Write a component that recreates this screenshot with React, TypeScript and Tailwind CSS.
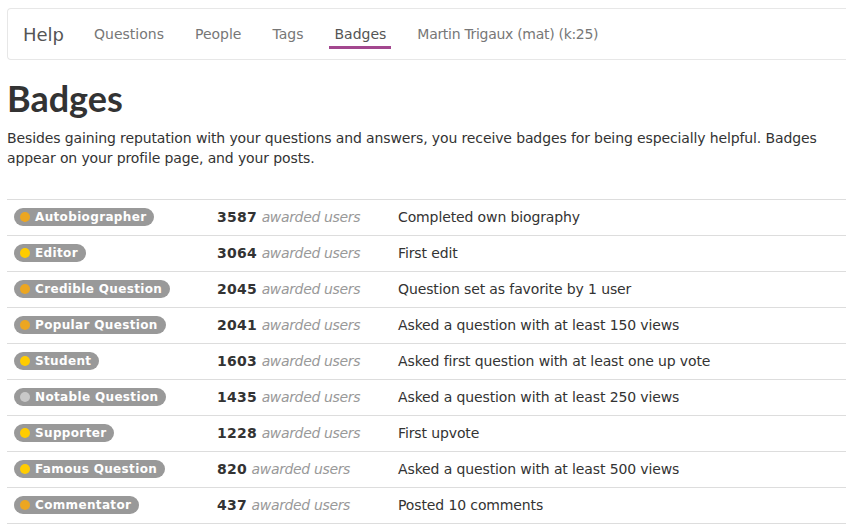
import React from 'react';

interface Badge {
  name: string;
  level: 'gold' | 'silver' | 'bronze';
  count: number;
  description: string;
}

const badges: Badge[] = [
  { name: 'Autobiographer', level: 'bronze', count: 3587, description: 'Completed own biography' },
  { name: 'Editor', level: 'gold', count: 3064, description: 'First edit' },
  { name: 'Credible Question', level: 'bronze', count: 2045, description: 'Question set as favorite by 1 user' },
  { name: 'Popular Question', level: 'bronze', count: 2041, description: 'Asked a question with at least 150 views' },
  { name: 'Student', level: 'gold', count: 1603, description: 'Asked first question with at least one up vote' },
  { name: 'Notable Question', level: 'silver', count: 1435, description: 'Asked a question with at least 250 views' },
  { name: 'Supporter', level: 'gold', count: 1228, description: 'First upvote' },
  { name: 'Famous Question', level: 'gold', count: 820, description: 'Asked a question with at least 500 views' },
  { name: 'Commentator', level: 'bronze', count: 437, description: 'Posted 10 comments' },
];

const dotColor = {
  gold: 'bg-[#ffcc00]',
  silver: 'bg-[#c8c8c8]',
  bronze: 'bg-[#eca621]',
};

const navLinks = ['Questions', 'People', 'Tags', 'Badges'];

export default function App() {
  return (
    <div className="min-h-screen bg-white pl-[7px] pt-[8px] font-['DejaVu_Sans',sans-serif] text-[#333] overflow-hidden">
      <nav className="flex items-stretch h-[52px] border border-r-0 border-[#e7e7e7] rounded-l-[4px] pl-[15px]">
        <span className="flex items-center text-[18px] text-[#555] pr-[14.5px]">Help</span>
        <ul className="flex items-end text-[14px] leading-[17px] text-[#777]">
          {navLinks.map(link => {
            const active = link === 'Badges';
            return (
              <li
                key={link}
                className={
                  'mx-[10.5px] mb-[10px] px-[5px] pb-[3px] border-b-[3px] ' +
                  (active ? 'border-[#a3478f] text-[#555]' : 'border-transparent')
                }
              >
                {link}
              </li>
            );
          })}
          <li className="mx-[10.5px] mb-[10px] px-[5px] pb-[3px] border-b-[3px] border-transparent tracking-[-0.3px]">
            Martin Trigaux (mat) (k:25)
          </li>
        </ul>
      </nav>

      <h1 className="mt-[18px] text-[36px] leading-[40px] font-bold font-['Lato',sans-serif] text-[#333]">Badges</h1>
      <p className="mt-[10px] text-[14px] leading-[20px] tracking-[-0.12px] pr-[20px]">
        Besides gaining reputation with your questions and answers, you receive badges for being especially helpful.
        Badges appear on your profile page, and your posts.
      </p>

      <table className="mt-[31px] w-[850px] border-collapse text-[14px]">
        <tbody>
          {badges.map(b => (
            <tr key={b.name} className="border-t border-b border-[#ddd] h-[36px]">
              <td className="pl-[7px] w-[210px] align-middle">
                <span className="inline-flex items-center h-[18px] rounded-full bg-[#999] pl-[6px] pr-[8px] text-[12px] font-bold text-white tracking-[0.35px]">
                  <span className={'w-[10px] h-[10px] rounded-full mr-[5px] ' + dotColor[b.level]} />
                  {b.name}
                </span>
              </td>
              <td className="w-[181px] align-middle">
                <span className="font-bold tracking-[0.3px]">{b.count}</span>{' '}
                <span className="italic text-[#999] tracking-[-0.35px]">awarded users</span>
              </td>
              <td className="align-middle tracking-[-0.12px]">{b.description}</td>
            </tr>
          ))}
        </tbody>
      </table>
    </div>
  );
}
